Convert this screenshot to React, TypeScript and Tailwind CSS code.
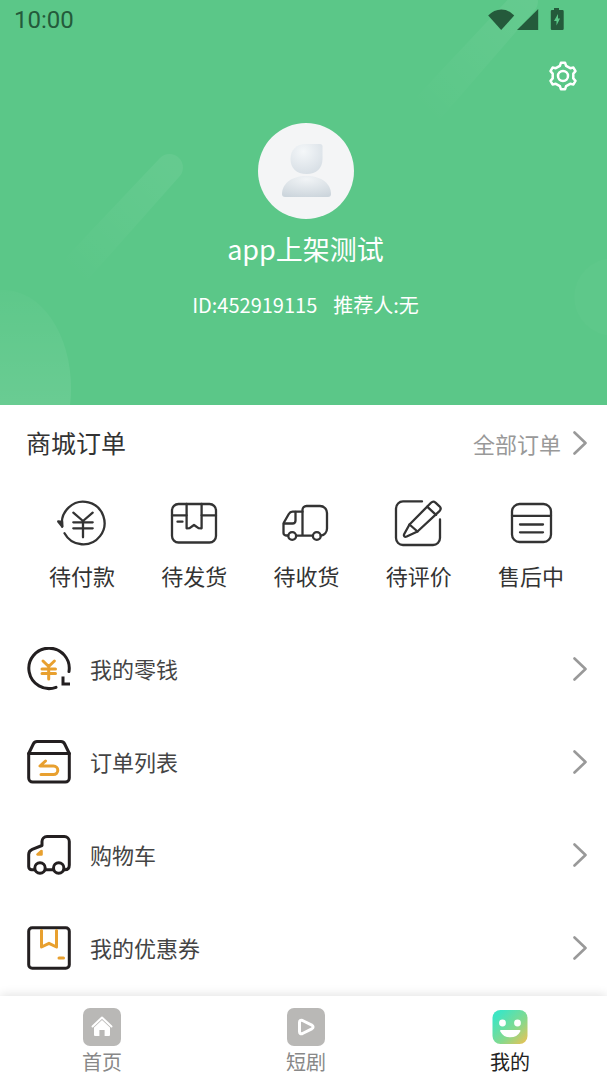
import type { ReactNode } from "react";

interface IconProps {
  children: ReactNode;
}

interface LinkItem {
  title: string;
  icon: ReactNode;
}

function OrderIcon({ children }: IconProps) {
  return (
    <svg className="h-12 w-[50px]" viewBox="0 0 50 48" fill="none" stroke="#333" strokeWidth="2.3" strokeLinecap="round" strokeLinejoin="round" aria-hidden="true">
      {children}
    </svg>
  );
}

function MenuIcon({ children }: IconProps) {
  return (
    <svg className="h-11 w-11" viewBox="0 0 44 44" fill="none" stroke="#231f20" strokeWidth="3" strokeLinecap="round" strokeLinejoin="round" aria-hidden="true">
      {children}
    </svg>
  );
}

function Chevron() {
  return (
    <svg className="h-6 w-[14px]" viewBox="0 0 14 24" fill="none" stroke="#999" strokeWidth="2.6" strokeLinecap="round" strokeLinejoin="round" aria-hidden="true">
      <path d="M1.500 1.500 12.500 12 1.500 22.500" />
    </svg>
  );
}

const orders: LinkItem[] = [
  {
    title: "待付款",
    icon: (
      <OrderIcon>
        <path d="M5.200 26.500A21.300 21.300 0 1 1 7.500 33.200" />
        <path d="m1.200 21.500 4 5V22z" />
        <path d="m16.300 12.700 9.700 8.300 9.700-8.300M26 21v16.300M16.300 22.300h19.400M16.300 28.300h19.400" />
      </OrderIcon>
    ),
  },
  {
    title: "待发货",
    icon: (
      <OrderIcon>
        <rect x="3" y="4" width="44" height="38.500" rx="6.500" />
        <path d="M3 15.300h14.600M32.600 15.300H47M8.500 21.700h5" />
        <path d="M17.600 4v24.300l3-.2L25 25l4.500 3.100 3.100.2V4" />
      </OrderIcon>
    ),
  },
  {
    title: "待收货",
    icon: (
      <OrderIcon>
        <path d="M7.200 35.500H5A2.500 2.500 0 0 1 2.500 33V24.500c0-1 .2-1.600.7-2.500l4.600-8c.9-1.600 2-2.300 3.800-2.300h9.900" />
        <path d="M31.800 35.700H21.500V10a4 4 0 0 1 4-4H39a7 7 0 0 1 7 7v15.500c0 3.500-2.500 6.500-6.200 7.200M15.200 35.700h6.300" />
        <path d="M2.800 23.500h8.700c2 0 3-1 3-3V12" />
        <circle cx="11.200" cy="36" r="3.900" />
        <circle cx="35.800" cy="36" r="3.900" />
      </OrderIcon>
    ),
  },
  {
    title: "待评价",
    icon: (
      <OrderIcon>
        <path d="M28 1.400H9a7 7 0 0 0-7 7V38a7 7 0 0 0 7 7h30a7 7 0 0 0 7-7V19.500" />
        <path d="M15.500 24.500 37 2.800a3.300 3.300 0 0 1 4.500-.2l4 3.700a3.300 3.300 0 0 1 .2 4.500L23.500 31.500l-10.800 5c-2 .8-3.300-.3-2.600-2.200z" />
        <path d="m15.500 24.500 8 7M33.200 6.700l8.800 8.200" />
      </OrderIcon>
    ),
  },
  {
    title: "售后中",
    icon: (
      <OrderIcon>
        <rect x="6" y="4" width="39" height="38" rx="7.500" />
        <path d="M6 15.800h39M14 24.500h23M14 32.300h23" />
      </OrderIcon>
    ),
  },
];

const menus: LinkItem[] = [
  {
    title: "我的零钱",
    icon: (
      <MenuIcon>
        <path d="M29 40.300A20.200 20.200 0 1 1 42 24.500" />
        <path d="M36 31v6h5.500" strokeLinecap="square" strokeLinejoin="miter" />
        <path d="m16 14 5.700 5.500 5.700-5.500M15 22h13.500M15 26.500h13.500M21.700 20v12" stroke="#e8a02f" />
      </MenuIcon>
    ),
  },
  {
    title: "订单列表",
    icon: (
      <MenuIcon>
        <path d="M1.700 13.500 6.300 4c.8-1.600 2-2.400 3.700-2.400h24c1.700 0 2.900.8 3.700 2.400l4.600 9.500" />
        <path d="M1.700 13.500h40.600V38a4 4 0 0 1-4 4H5.700a4 4 0 0 1-4-4z" />
        <path d="m18.500 21-5.500 5h13.500a4.300 4.300 0 0 1 0 8.600H14" stroke="#e8a02f" />
      </MenuIcon>
    ),
  },
  {
    title: "购物车",
    icon: (
      <MenuIcon>
        <path d="M7.500 36.800H4.700a3 3 0 0 1-3-3V21.500c0-2.500 1.200-4.200 3.500-5.200l9.800-3.800V8.500a5 5 0 0 1 5-5h17.300a5 5 0 0 1 5 5V32c0 3-1.500 4.800-4.500 4.800h-.8M18.500 36.800h7.500" />
        <circle cx="13" cy="35" r="5.200" />
        <circle cx="31.700" cy="35" r="5.200" />
        <path d="M10.500 21.500h4V18z" stroke="#e8a02f" strokeWidth="2.600" />
      </MenuIcon>
    ),
  },
  {
    title: "我的优惠券",
    icon: (
      <MenuIcon>
        <rect x="1.700" y="1.700" width="40.600" height="40.600" rx="3.500" />
        <path d="M14.500 4.500V21l7.500-3.700 7.500 3.700V4.500M32 32h4.500" stroke="#e8a02f" />
      </MenuIcon>
    ),
  },
];

const tabs = [
  {
    title: "首页",
    active: false,
    icon: (
      <svg className="h-[38px] w-[38px]" viewBox="0 0 38 38" fill="none" aria-hidden="true">
        <rect width="38" height="38" rx="7" fill="#b9b8b6" />
        <path d="m9.500 18.500 9.500-9 9.500 9" stroke="#fff" strokeWidth="2" strokeLinecap="round" strokeLinejoin="round" />
        <path d="m11 19.600 8-7.500 8 7.500V27a1 1 0 0 1-1 1h-4.400v-6h-5.200v6H12a1 1 0 0 1-1-1z" fill="#fff" />
      </svg>
    ),
  },
  {
    title: "短剧",
    active: false,
    icon: (
      <svg className="h-[38px] w-[38px]" viewBox="0 0 38 38" fill="none" aria-hidden="true">
        <rect width="38" height="38" rx="7" fill="#b9b8b6" />
        <path d="M12.500 14.500c0-2 1-2.700 3-2l9.300 4.600c1.700 1 1.700 2.700 0 3.700l-9.300 4.700c-2 .8-3 0-3-2z" stroke="#fff" strokeWidth="3" strokeLinejoin="round" />
      </svg>
    ),
  },
  {
    title: "我的",
    active: true,
    icon: (
      <svg className="h-[38px] w-[38px]" viewBox="0 0 38 38" fill="none" aria-hidden="true">
        <defs>
          <linearGradient id="smile" x1="0" y1="0" x2="1" y2="1">
            <stop offset="0.150" stopColor="#3fe5c2" />
            <stop offset="0.600" stopColor="#86d98d" />
            <stop offset="1" stopColor="#f2c04f" />
          </linearGradient>
        </defs>
        <rect x="1.500" y="2" width="35" height="34" rx="8" fill="url(#smile)" />
        <circle cx="11.500" cy="15" r="3.400" fill="#fff" />
        <circle cx="26.500" cy="15" r="3.400" fill="#fff" />
        <path d="M10 22h18.500c1 0 1.200.6.8 1.400a11.400 11.400 0 0 1-20 0c-.5-.8-.3-1.400.7-1.400z" fill="#fff" />
      </svg>
    ),
  },
];

function StatusBar() {
  return (
    <div className="flex h-10 items-center justify-between pl-3.5 pr-[42px] text-[#245a3b]">
      <span className="font-[Roboto,sans-serif] text-2xl">10:00</span>
      <svg className="h-6 w-[78px]" viewBox="0 0 78 24" fill="currentColor" aria-hidden="true">
        <path d="M1.200 7.500C8.500-.5 20-.5 27.200 7.500L14.200 22z" />
        <path d="M51.200 1v21H30z" />
        <path fillRule="evenodd" d="M67 0h5v2h3.500a1.200 1.200 0 0 1 1.200 1.200v17.600a1.200 1.200 0 0 1-1.200 1.200H65a1.200 1.200 0 0 1-1.200-1.200V3.200A1.200 1.200 0 0 1 65 2h2zm4 6-4 7h2.500v4.500l3.500-7h-2z" />
      </svg>
    </div>
  );
}

function Profile() {
  return (
    <header className="relative h-[405px] overflow-hidden bg-[#5bc788] text-white">
      <svg className="absolute inset-0 h-full w-full" viewBox="0 0 607 405" preserveAspectRatio="none" aria-hidden="true">
        <defs>
          <linearGradient id="beam" x1="1" y1="0" x2="0" y2="1">
            <stop offset="0.100" stopColor="#fff" stopOpacity="0.060" />
            <stop offset="0.900" stopColor="#fff" stopOpacity="0" />
          </linearGradient>
          <linearGradient id="bubble" x1="0" y1="0" x2="0" y2="1">
            <stop offset="0" stopColor="#fff" stopOpacity="0.020" />
            <stop offset="0.600" stopColor="#fff" stopOpacity="0.090" />
          </linearGradient>
        </defs>
        <path d="M160 158a13 13 0 0 1 19 19L84 284l-30-14z" fill="url(#beam)" />
        <path d="M515-8a13 13 0 0 1 19 19L436 124l-30-16z" fill="url(#beam)" />
        <ellipse cx="4" cy="388" rx="67" ry="98" fill="url(#bubble)" />
        <circle cx="613" cy="297" r="39" fill="#fff" fillOpacity="0.020" />
      </svg>
      <div className="relative">
        <StatusBar />
        <div className="flex justify-end pr-7 pt-5">
          <button type="button" aria-label="设置" className="h-8 w-8">
            <svg className="h-8 w-8" viewBox="0 0 32 32" fill="none" stroke="currentColor" strokeWidth="2.500" strokeLinejoin="round" aria-hidden="true">
              <path d="M12.900 5.900 13.900 2.800h4.200l1 3.100 4.100 2.300 3.200-.6 2.100 3.600-2.200 2.400v4.800l2.200 2.400-2.100 3.600-3.200-.6-4.100 2.300-1 3.100h-4.200l-1-3.100-4.100-2.300-3.200.6-2.100-3.600 2.200-2.400v-4.800l-2.200-2.400 2.100-3.600 3.200.6z" />
              <circle cx="16" cy="16" r="5" />
            </svg>
          </button>
        </div>
        <div className="flex flex-col items-center pl-1 pt-[31px]">
          <svg className="h-24 w-24" viewBox="0 0 96 96" role="img" aria-label="头像">
            <defs>
              <radialGradient id="head" cx="0.400" cy="0.250" r="0.900">
                <stop offset="0" stopColor="#f4f7f9" />
                <stop offset="1" stopColor="#d3dbe2" />
              </radialGradient>
              <radialGradient id="body" cx="0.500" cy="0.150" r="0.900">
                <stop offset="0" stopColor="#f1f4f6" />
                <stop offset="1" stopColor="#ccd5dc" />
              </radialGradient>
            </defs>
            <circle cx="48" cy="48" r="48" fill="#f4f5f6" />
            <path d="M48 21h14a2.500 2.500 0 0 1 2.500 2.500V36c0 9-6 15-16 15s-16-6-16-15 6-15 15.500-15z" fill="url(#head)" />
            <path d="M24 71c0-10 9-18 24.500-18S73 61 73 71c0 2-1 3-3 3H27c-2 0-3-1-3-3z" fill="url(#body)" />
          </svg>
          <h1 className="pt-2.5 text-[27px] leading-10">app上架测试</h1>
          <p className="flex gap-4 pt-5 text-xl leading-8">
            <span>ID:452919115</span>
            <span>推荐人:无</span>
          </p>
        </div>
      </div>
    </header>
  );
}

function Orders() {
  return (
    <section className="pl-[26px] pr-5">
      <div className="flex h-[76px] items-center justify-between text-[#333]">
        <h2 className="text-[25px]">商城订单</h2>
        <a href="#orders" className="flex items-center gap-3 text-[22px] text-[#999]">
          全部订单
          <Chevron />
        </a>
      </div>
      <div className="grid grid-cols-5 pt-[19px]">
        {orders.map((order) => (
          <a key={order.title} href="#order" className="flex flex-col items-center gap-[11px] text-[22px] leading-8 text-[#333]">
            {order.icon}
            {order.title}
          </a>
        ))}
      </div>
    </section>
  );
}

function Menu() {
  return (
    <nav className="pl-[27px] pr-5 pt-[31px]">
      {menus.map((menu) => (
        <a key={menu.title} href="#menu" className="flex h-[93px] items-center gap-[19px] text-[22px] text-[#444]">
          {menu.icon}
          <span className="grow">{menu.title}</span>
          <Chevron />
        </a>
      ))}
    </nav>
  );
}

function TabBar() {
  return (
    <nav className="sticky bottom-0 flex h-[84px] justify-between bg-white pl-[82px] pr-[77px] pt-3 shadow-[0_-1px_10px_rgba(0,0,0,0.12)]">
      {tabs.map((tab) => (
        <button key={tab.title} type="button" className={tab.active ? "flex flex-col items-center text-xl leading-8 text-[#222]" : "flex flex-col items-center text-xl leading-8 text-[#888]"}>
          {tab.icon}
          {tab.title}
        </button>
      ))}
    </nav>
  );
}

function App() {
  return (
    <div className="flex min-h-screen flex-col bg-white font-['Noto_Sans_CJK_SC',sans-serif]">
      <Profile />
      <main className="grow">
        <Orders />
        <Menu />
      </main>
      <TabBar />
    </div>
  );
}

export default App;
